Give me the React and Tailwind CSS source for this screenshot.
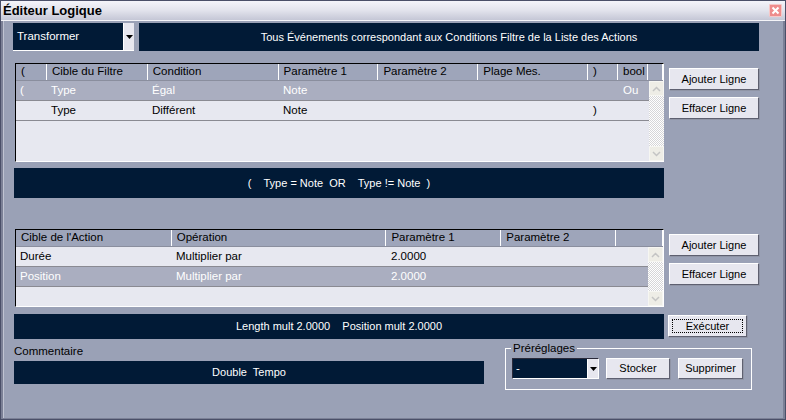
import React from 'react';

const font = { fontFamily: '"Liberation Sans", Arial, sans-serif' };

const Btn = ({ children, className = '', focus = false }) => (
  <div
    className={`flex items-center justify-center bg-[#e7e7ef] text-[11px] text-black border border-t-white border-l-white border-b-[#5e6070] border-r-[#5e6070] shadow-[1px_1px_0_#9095a6] ${className}`}
  >
    {focus ? (
      <span className="flex items-center justify-center w-[calc(100%-6px)] h-[calc(100%-6px)] border border-dotted border-black">
        {children}
      </span>
    ) : (
      children
    )}
  </div>
);

const Arrow = () => (
  <div className="flex items-center justify-center w-[11px] h-full bg-[#e7e7ef] border-l border-white">
    <svg width="7" height="4" viewBox="0 0 7 4">
      <polygon points="0,0 7,0 3.5,4" fill="#000" />
    </svg>
  </div>
);

const Scrollbar = () => (
  <div className="flex flex-col w-[15px] h-full bg-[repeating-conic-gradient(#ffffff_0_25%,#d6d6d8_0_50%)] bg-[length:2px_2px]">
    <div className="flex items-center justify-center w-[15px] h-[15px] bg-[#eeede6] border border-[#f6f6f2]">
      <svg width="9" height="6" viewBox="0 0 9 6">
        <polyline points="1,5 4.5,1.5 8,5" fill="none" stroke="#c4c4c4" strokeWidth="1.5" />
      </svg>
    </div>
    <div className="flex-1" />
    <div className="flex items-center justify-center w-[15px] h-[15px] bg-[#eeede6] border border-[#f6f6f2]">
      <svg width="9" height="6" viewBox="0 0 9 6">
        <polyline points="1,1 4.5,4.5 8,1" fill="none" stroke="#c4c4c4" strokeWidth="1.5" />
      </svg>
    </div>
  </div>
);

const Table = ({ cols, rows, height }) => (
  <div
    className="flex flex-col w-[649px] border-t border-l border-t-black border-l-black border-b border-r border-b-white border-r-white bg-[#e7e8f0]"
    style={{ height }}
  >
    <div className="flex h-[17px] bg-[#9ea5ba] border-b border-[#8a8e9e] shrink-0">
      {cols.map((c, i) => (
        <div
          key={i}
          className="flex items-center pl-[5px] text-[11.5px] text-black border-r border-white overflow-hidden whitespace-nowrap"
          style={{ width: c.w }}
        >
          {c.label}
        </div>
      ))}
    </div>
    <div className="flex flex-1 min-h-0">
      <div className="flex flex-col flex-1">
        {rows.map((r, ri) => (
          <div
            key={ri}
            className={`flex h-[20px] border-b border-[#8a8a92] ${r.sel ? 'bg-[#aaaec0] text-white' : 'text-black'}`}
          >
            {r.cells.map((v, ci) => (
              <div
                key={ci}
                className="flex items-center pl-[4px] text-[11.5px] whitespace-nowrap overflow-hidden"
                style={{ width: cols[ci].w }}
              >
                {v}
              </div>
            ))}
          </div>
        ))}
      </div>
      <Scrollbar />
    </div>
  </div>
);

const filterCols = [
  { label: '(', w: 31 },
  { label: 'Cible du Filtre', w: 101 },
  { label: 'Condition', w: 131 },
  { label: 'Paramètre 1', w: 100 },
  { label: 'Paramètre 2', w: 100 },
  { label: 'Plage Mes.', w: 110 },
  { label: ')', w: 30 },
  { label: 'bool', w: 30 },
  { label: '', w: 15 },
];

const filterRows = [
  { sel: true, cells: ['(', 'Type', 'Égal', 'Note', '', '', '', 'Ou'] },
  { sel: false, cells: ['', 'Type', 'Différent', 'Note', '', '', ')', ''] },
];

const actionCols = [
  { label: "Cible de l'Action", w: 156 },
  { label: 'Opération', w: 215 },
  { label: 'Paramètre 1', w: 115 },
  { label: 'Paramètre 2', w: 115 },
  { label: '', w: 47 },
];

const actionRows = [
  { sel: false, cells: ['Durée', 'Multiplier par', '2.0000', ''] },
  { sel: true, cells: ['Position', 'Multiplier par', '2.0000', ''] },
];

const Bar = ({ children, className = '' }) => (
  <div className={`flex items-center justify-center bg-[#011a36] text-white text-[11px] whitespace-pre ${className}`}>
    {children}
  </div>
);

export default function App() {
  return (
    <div className="w-[786px] h-[420px] bg-[#7b8096] overflow-hidden" style={font}>
      <div className="flex flex-col w-[786px] h-[420px] border border-[#4a4f68]">
        {/* title bar */}
        <div className="flex items-center justify-between h-[20px] pl-[2px] pr-[3px] bg-gradient-to-b from-[#f4f4fa] via-[#e2e3ec] to-[#c5c7d6] border-b border-[#f4f4f8] shrink-0">
          <span className="text-[13px] font-bold text-black">Éditeur Logique</span>
          <div className="flex items-center justify-center w-[13px] h-[13px] bg-[#ee8c8c] border border-[#f6c8c8] rounded-[1px]">
            <svg width="9" height="9" viewBox="0 0 9 9">
              <path d="M1.5 1.5 L7.5 7.5 M7.5 1.5 L1.5 7.5" stroke="#fff" strokeWidth="2" />
            </svg>
          </div>
        </div>

        {/* body */}
        <div className="flex flex-col flex-1 ml-[2px] mr-[2px] mb-[1px] bg-[#9aa1b6] border-l border-[#c0c4d2]">
          <div className="flex mt-[2px] h-[28px]">
            <div className="flex ml-[9px] w-[121px] h-[28px] border-b border-white">
              <div className="flex items-center flex-1 bg-[#011a36] text-white text-[11.5px] pl-[4px]">Transformer</div>
              <Arrow />
            </div>
            <Bar className="ml-[5px] w-[620px] h-[28px]">
              Tous Événements correspondant aux Conditions Filtre de la Liste des Actions
            </Bar>
          </div>

          <div className="flex mt-[12px]">
            <div className="ml-[11px]">
              <Table cols={filterCols} rows={filterRows} height={99} />
            </div>
            <div className="flex flex-col gap-[7px] ml-[5px] mt-[5px]">
              <Btn className="w-[90px] h-[22px]">Ajouter Ligne</Btn>
              <Btn className="w-[90px] h-[22px]">Effacer Ligne</Btn>
            </div>
          </div>

          <Bar className="mt-[6px] ml-[10px] w-[650px] h-[30px]">{'(    Type = Note  OR    Type != Note  )'}</Bar>

          <div className="flex mt-[31px]">
            <div className="ml-[11px]">
              <Table cols={actionCols} rows={actionRows} height={78} />
            </div>
            <div className="flex flex-col gap-[7px] ml-[5px] mt-[5px]">
              <Btn className="w-[90px] h-[22px]">Ajouter Ligne</Btn>
              <Btn className="w-[90px] h-[22px]">Effacer Ligne</Btn>
            </div>
          </div>

          <div className="flex mt-[7px]">
            <Bar className="ml-[10px] w-[650px] h-[25px]">{'Length mult 2.0000    Position mult 2.0000'}</Bar>
            <Btn focus className="ml-[4px] mt-[1px] w-[79px] h-[22px]">Exécuter</Btn>
          </div>

          <div className="flex">
            <div className="flex flex-col ml-[10px] w-[470px]">
              <span className="mt-[3px] h-[19px] text-[11.5px] text-black leading-[18px]">Commentaire</span>
              <Bar className="h-[23px]">{'Double  Tempo'}</Bar>
            </div>
            <fieldset className="ml-[21px] mt-[2px] w-[247px] h-[49px] border border-white">
              <legend className="ml-[5px] px-[2px] text-[11.5px] text-black leading-[14px]">Préréglages</legend>
              <div className="flex items-center mt-[3px]">
                <div className="flex ml-[6px] w-[87px] h-[21px] border-b border-r border-white border-t border-l border-t-[#2a2a3a] border-l-[#2a2a3a]">
                  <div className="flex items-center flex-1 bg-[#011a36] text-white text-[11.5px] pl-[3px]">-</div>
                  <Arrow />
                </div>
                <Btn className="ml-[7px] w-[64px] h-[21px]">Stocker</Btn>
                <Btn className="ml-[8px] w-[65px] h-[21px]">Supprimer</Btn>
              </div>
            </fieldset>
          </div>
        </div>
      </div>
    </div>
  );
}
